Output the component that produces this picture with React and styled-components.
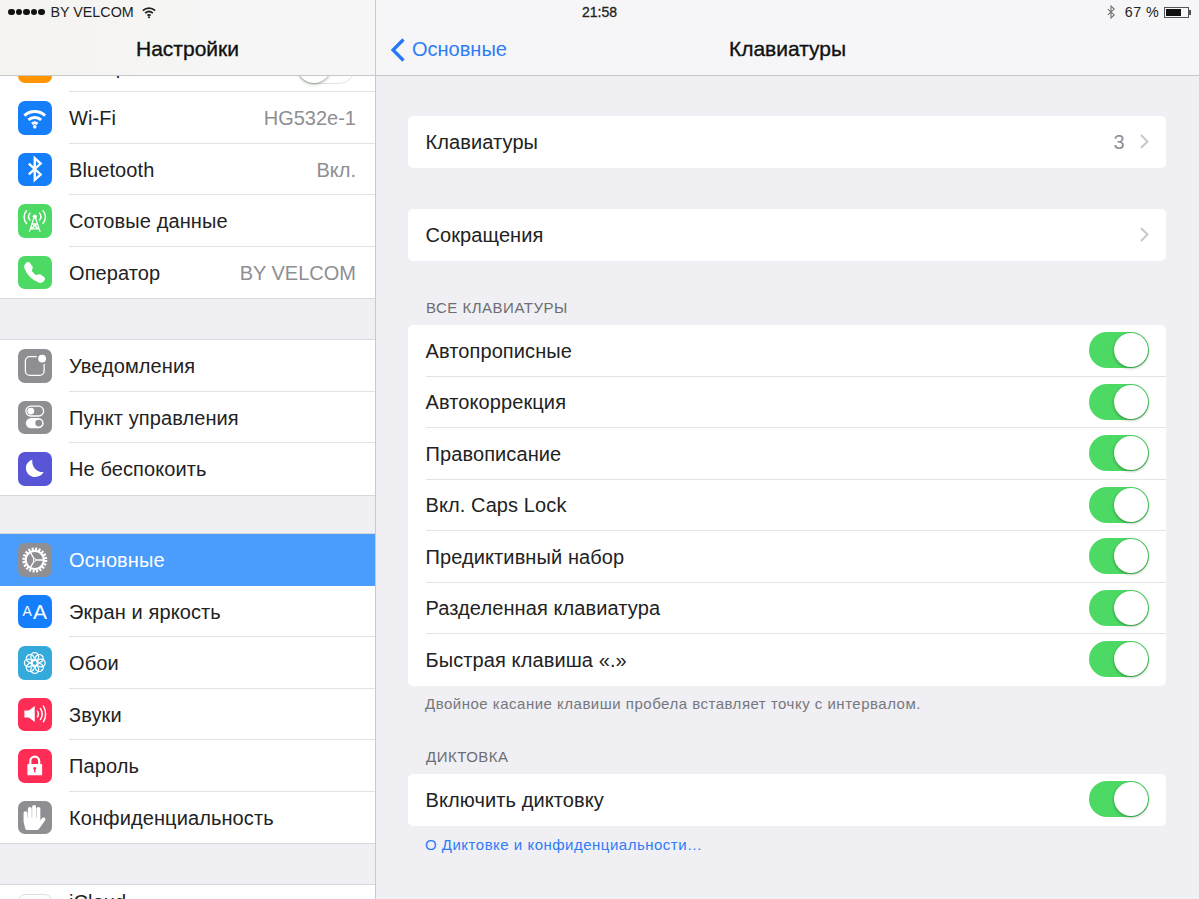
import React from 'react';
import styled, { createGlobalStyle } from 'styled-components';
import { BsTelephoneFill } from 'react-icons/bs';
import { FaHandPaper } from 'react-icons/fa';

const GlobalStyle = createGlobalStyle`
  html, body {
    margin: 0;
    padding: 0;
    background: #efeff4;
    font-family: "Liberation Sans", Arial, sans-serif;
    color: #222;
  }
  * {
    box-sizing: border-box;
  }
`;

const Page = styled.div`
  position: relative;
  width: 1199px;
  height: 899px;
  overflow: hidden;
  display: flex;
  background: #efeff4;
`;

const StatusBar = styled.div`
  position: absolute;
  top: 0;
  left: 0;
  right: 0;
  height: 24px;
  padding: 0 8px;
  display: grid;
  grid-template-columns: 1fr auto 1fr;
  align-items: center;
  font-size: 14.3px;
  color: #222;
  z-index: 2;
`;

const StatusLeft = styled.div`
  display: flex;
  align-items: center;
  gap: 5px;
`;

const StatusRight = styled.div`
  display: flex;
  align-items: center;
  justify-content: flex-end;
`;

const Dots = styled.div`
  display: flex;
  gap: 1px;
  margin-right: 1px;
`;

const Dot = styled.span`
  width: 6.5px;
  height: 6.5px;
  border-radius: 50%;
  background: #111;
`;

const Clock = styled.div`
  font-size: 14px;
  -webkit-text-stroke: 0.3px #222;
`;

const BatteryText = styled.span`
  margin-left: 5px;
  letter-spacing: 0.4px;
`;

const Battery = styled.div`
  position: relative;
  width: 25px;
  height: 11px;
  margin: 0 2px 0 5px;
  border: 1px solid #555;
  padding: 1px;

  &::before {
    content: '';
    display: block;
    width: 15px;
    height: 100%;
    background: #111;
  }

  &::after {
    content: '';
    position: absolute;
    right: -3px;
    top: 2px;
    width: 2px;
    height: 5px;
    background: #555;
  }
`;

const Sidebar = styled.aside`
  width: 376px;
  flex: none;
  display: flex;
  flex-direction: column;
  border-right: 1px solid #c9c9cd;
  overflow: hidden;
`;

const NavBar = styled.header`
  position: relative;
  height: 76px;
  flex: none;
  padding-top: 24px;
  border-bottom: 1px solid #c8c8cc;
  background: ${(p) => (p.$warm ? 'linear-gradient(90deg, #f5f3ef, #f6f6f6 60%)' : '#f6f6f8')};
  display: grid;
  grid-template-columns: 1fr auto 1fr;
  align-items: center;
  z-index: 1;
`;

const NavTitle = styled.div`
  font-size: 21px;
  margin-bottom: 2px;
  -webkit-text-stroke: 0.35px #111;
  color: #111;
  grid-column: 2;
`;

const BackLink = styled.div`
  grid-column: 1;
  display: flex;
  align-items: center;
  gap: 6px;
  padding-left: 14px;
  color: #2f7cf6;
  font-size: 20px;
`;

const ScrollArea = styled.div`
  flex: 1;
  min-height: 0;
  overflow: hidden;
`;

const SideList = styled.div`
  margin-top: -35.5px;
`;

const SideGroup = styled.div`
  background: #fff;
  box-shadow: 0 1px #d9d9dd, 0 -1px ${(p) => (p.$first ? 'transparent' : '#d9d9dd')};
  margin-bottom: ${(p) => p.$gap}px;
`;

const SideRow = styled.div`
  position: relative;
  height: 51.5px;
  display: flex;
  align-items: center;
  padding: 0 19px 0 18px;
  font-size: 20px;
  background: ${(p) => (p.$active ? '#4a9cfd' : 'transparent')};
  color: ${(p) => (p.$active ? '#fff' : 'inherit')};

  & + &::before {
    content: '';
    position: absolute;
    top: -1px;
    left: 69px;
    right: 0;
    height: 1px;
    background: #e2e2e4;
  }
`;

const IconTile = styled.div`
  width: 33.5px;
  height: 33.5px;
  flex: none;
  border-radius: 7px;
  margin-right: 17.5px;
  background: ${(p) => p.$bg};
  border: ${(p) => (p.$bg === '#fff' ? '1px solid #ddd' : 'none')};
  color: #fff;
  display: flex;
  align-items: center;
  justify-content: center;
  font-size: 20px;
`;

const TileText = styled.span`
  font-size: ${(p) => p.$size}px;
  line-height: 1;
  margin-right: ${(p) => p.$gap || 0}px;
`;

const RowLabel = styled.div`
  flex: 1;
  padding: ${(p) => (p.$raised ? '0 0 16px' : '2px 0 0')};
  letter-spacing: 0.1px;
`;

const RowValue = styled.div`
  padding-top: 2px;
  color: #8e8e93;
`;

const Main = styled.main`
  flex: 1;
  min-width: 0;
  display: flex;
  flex-direction: column;
`;

const Content = styled.div`
  padding: 40px 33px 0 32px;
`;

const Card = styled.div`
  background: #fff;
  border-radius: 5px;
  margin-top: ${(p) => p.$gap || 0}px;
`;

const CardRow = styled.div`
  position: relative;
  height: 51.5px;
  display: flex;
  align-items: center;
  padding: 0 17.5px;
  font-size: 20px;

  & + &::before {
    content: '';
    position: absolute;
    top: -1px;
    left: 17.5px;
    right: 0;
    height: 1px;
    background: #e4e4e6;
  }
`;

const CardLabel = styled.div`
  flex: 1;
  padding-top: 1px;
  letter-spacing: 0.1px;
`;

const Count = styled.div`
  color: #8e8e93;
  padding-top: 1px;
  margin-right: 15px;
`;

const SectionLabel = styled.div`
  margin-top: ${(p) => p.$gap}px;
  height: 27px;
  padding: 1px 18px 0;
  line-height: 18px;
  font-size: 15px;
  letter-spacing: 0.5px;
  color: #6d6d72;
`;

const Note = styled.div`
  padding: ${(p) => (p.$link ? 10 : 9)}px 17px 0;
  line-height: 18px;
  font-size: 15px;
  letter-spacing: 0.5px;
  color: ${(p) => (p.$link ? '#2f7cf6' : '#77777c')};
`;

const Track = styled.div`
  position: relative;
  width: 60px;
  height: 36px;
  flex: none;
  margin-bottom: 1.5px;
  border-radius: 18px;
  background: ${(p) => (p.$on ? '#4cd964' : '#fff')};
  border: ${(p) => (p.$on ? 'none' : '1px solid #e2e2e4')};
`;

const Knob = styled.div`
  position: absolute;
  top: ${(p) => (p.$on ? 1 : 0)}px;
  ${(p) => (p.$on ? 'right: 1px' : 'left: 0')};
  width: 34px;
  height: 34px;
  border-radius: 50%;
  background: #fff;
  box-shadow: 0 1px 3px rgba(0, 40, 0, 0.45);
`;

const Toggle = ({ on }) => (
  <Track $on={on}>
    <Knob $on={on} />
  </Track>
);

const Chevron = () => (
  <svg width="9" height="15" viewBox="0 0 9 15">
    <path d="M1 1l6.5 6.5L1 14" fill="none" stroke="#c7c7cc" strokeWidth="2" />
  </svg>
);

const WifiGlyph = ({ size = 34, color = '#fff' }) => (
  <svg width={size} height={size} viewBox="0 0 34 34" fill="none" stroke={color} strokeWidth="3">
    <path d="M6.5 14.5c6-5.5 15-5.5 21 0" />
    <path d="M10.5 19c3.800-3.400 9.200-3.400 13 0" />
    <path d="M14.200 23c1.700-1.400 3.900-1.400 5.600 0" />
    <circle cx="17" cy="26" r="1.800" fill={color} stroke="none" />
  </svg>
);

const BluetoothGlyph = ({ size = 34, color = '#fff', width = 2.4 }) => (
  <svg width={size} height={size} viewBox="0 0 34 34" fill="none" stroke={color} strokeWidth={width}>
    <path d="M11 11.500l12 11-6 5.500V6l6 5.500-12 11" />
  </svg>
);

const Icons = {
  airplane: () => null,
  wifi: () => <WifiGlyph />,
  bluetooth: () => <BluetoothGlyph />,
  cellular: () => (
    <svg width="34" height="34" viewBox="0 0 34 34" fill="none" stroke="#fff" strokeWidth="1.300">
      <circle cx="17" cy="12.500" r="2.200" fill="#fff" stroke="none" />
      <path d="M16.500 13L11.500 28M17.500 13l5 15M14.500 20h5M13 25l6.500-5M21 25l-6.500-5M12.500 25h9" />
      <path d="M12.500 8.500c-2.200 2.400-2.200 5.600 0 8M21.500 8.500c2.200 2.400 2.200 5.600 0 8" strokeWidth="1.500" />
      <path d="M9 6c-3.800 4-3.800 10 0 14M25 6c3.800 4 3.800 10 0 14" strokeWidth="1.500" />
    </svg>
  ),
  phone: () => <BsTelephoneFill size={21} />,
  notifications: () => (
    <svg width="34" height="34" viewBox="0 0 34 34" fill="none">
      <rect x="7.500" y="7.500" width="19" height="19" rx="4.500" stroke="#fff" strokeWidth="1.300" />
      <circle cx="24.500" cy="9.500" r="5.800" fill="#8e8e93" />
      <circle cx="24.500" cy="9.500" r="4" fill="#fff" />
    </svg>
  ),
  control: () => (
    <svg width="34" height="34" viewBox="0 0 34 34" fill="none">
      <rect x="8" y="6" width="18" height="10" rx="5" stroke="#fff" strokeWidth="1.300" />
      <circle cx="13" cy="11" r="3.500" fill="#fff" />
      <rect x="8" y="18" width="18" height="10.500" rx="5.250" fill="#fff" />
      <circle cx="21" cy="23.200" r="3.500" fill="#8e8e93" />
    </svg>
  ),
  moon: () => (
    <svg width="34" height="34" viewBox="0 0 34 34">
      <path d="M14.500 7.500c-.8 6.800 4 12.800 11.500 12.600-1.800 3.300-5 5-8.500 5-5.400 0-9.500-4.200-9.500-9.200 0-3.800 2.600-7.200 6.500-8.400z" fill="#fff" />
    </svg>
  ),
  gear: () => (
    <svg width="34" height="34" viewBox="0 0 34 34" fill="none" stroke="#fff">
      <circle cx="17" cy="17" r="9.200" strokeWidth="2.200" />
      <circle cx="17" cy="17" r="11.200" strokeWidth="3" strokeDasharray="2.100 1.420" />
      <circle cx="17" cy="17" r="1.400" strokeWidth="1" />
      <path d="M18.400 17h7.800M16.300 15.800L12.400 9M16.300 18.200l-3.900 6.800" strokeWidth="1.300" />
    </svg>
  ),
  text: () => (
    <>
      <TileText $size={14} $gap={1}>A</TileText>
      <TileText $size={21}>A</TileText>
    </>
  ),
  flower: () => (
    <svg width="34" height="34" viewBox="0 0 34 34" fill="none" stroke="#fff" strokeWidth="1.300">
      <circle cx="17" cy="17" r="3.200" />
      {[0, 45, 90, 135, 180, 225, 270, 315].map((a) => (
        <circle key={a} cx="17" cy="10.500" r="4" transform={`rotate(${a} 17 17)`} />
      ))}
    </svg>
  ),
  sound: () => (
    <svg width="34" height="34" viewBox="0 0 34 34" fill="none" stroke="#fff" strokeWidth="1.500">
      <path d="M6.500 13.500h4.500l6-4.500v16l-6-4.500H6.500z" fill="#fff" stroke="none" />
      <path d="M19.500 13.500c1.500 2.200 1.500 4.800 0 7M22.500 11c2.500 3.600 2.500 8.400 0 12M25.500 8.500c3.400 5 3.400 12 0 17" />
    </svg>
  ),
  lock: () => (
    <svg width="34" height="34" viewBox="0 0 34 34">
      <path d="M12.500 16v-4a4.500 4.500 0 0 1 9 0v4" fill="none" stroke="#fff" strokeWidth="2.200" />
      <rect x="9.500" y="15" width="15" height="11.500" rx="1" fill="#fff" />
      <circle cx="17" cy="19.500" r="1.500" fill="#ff2d55" />
      <rect x="16.300" y="20" width="1.400" height="3.500" fill="#ff2d55" />
    </svg>
  ),
  hand: () => <FaHandPaper size={25} style={{ transform: 'scaleX(-1)' }} />,
  cloud: () => null,
};

const sideGroups = [
  {
    gap: 42,
    rows: [
      { icon: 'airplane', bg: '#ff9500', label: 'Авиарежим', toggle: true },
      { icon: 'wifi', bg: '#147efb', label: 'Wi-Fi', value: 'HG532e-1' },
      { icon: 'bluetooth', bg: '#147efb', label: 'Bluetooth', value: 'Вкл.' },
      { icon: 'cellular', bg: '#4cd964', label: 'Сотовые данные' },
      { icon: 'phone', bg: '#4cd964', label: 'Оператор', value: 'BY VELCOM' },
    ],
  },
  {
    gap: 39.5,
    rows: [
      { icon: 'notifications', bg: '#8e8e93', label: 'Уведомления' },
      { icon: 'control', bg: '#8e8e93', label: 'Пункт управления' },
      { icon: 'moon', bg: '#5856d6', label: 'Не беспокоить' },
    ],
  },
  {
    gap: 42,
    rows: [
      { icon: 'gear', bg: '#8e8e93', label: 'Основные', active: true },
      { icon: 'text', bg: '#147efb', label: 'Экран и яркость' },
      { icon: 'flower', bg: '#34aadc', label: 'Обои' },
      { icon: 'sound', bg: '#ff2d55', label: 'Звуки' },
      { icon: 'lock', bg: '#ff2d55', label: 'Пароль' },
      { icon: 'hand', bg: '#8e8e93', label: 'Конфиденциальность' },
    ],
  },
  { gap: 0, rows: [{ icon: 'cloud', bg: '#fff', label: 'iCloud', raised: true }] },
];

const keyboardToggles = [
  'Автопрописные',
  'Автокоррекция',
  'Правописание',
  'Вкл. Caps Lock',
  'Предиктивный набор',
  'Разделенная клавиатура',
  'Быстрая клавиша «.»',
];

const App = () => {
  return (
    <Page>
      <GlobalStyle />
      <StatusBar>
        <StatusLeft>
          <Dots>
            {[0, 1, 2, 3, 4].map((i) => (
              <Dot key={i} />
            ))}
          </Dots>
          BY VELCOM
          <WifiGlyph size={20} color="#222" />
        </StatusLeft>
        <Clock>21:58</Clock>
        <StatusRight>
          <BluetoothGlyph size={18} color="#777" width={2.2} />
          <BatteryText>67 %</BatteryText>
          <Battery />
        </StatusRight>
      </StatusBar>

      <Sidebar>
        <NavBar $warm>
          <NavTitle>Настройки</NavTitle>
        </NavBar>
        <ScrollArea>
          <SideList>
            {sideGroups.map((group, i) => (
              <SideGroup key={i} $first={i === 0} $gap={group.gap}>
                {group.rows.map((row) => {
                  const Icon = Icons[row.icon];
                  return (
                    <SideRow key={row.label} $active={row.active}>
                      <IconTile $bg={row.bg}>
                        <Icon />
                      </IconTile>
                      <RowLabel $raised={row.raised}>{row.label}</RowLabel>
                      {row.value && <RowValue>{row.value}</RowValue>}
                      {row.toggle && <Toggle />}
                    </SideRow>
                  );
                })}
              </SideGroup>
            ))}
          </SideList>
        </ScrollArea>
      </Sidebar>

      <Main>
        <NavBar>
          <BackLink>
            <svg width="16" height="24" viewBox="0 0 16 24">
              <path d="M13.500 1.500L3 12l10.500 10.500" fill="none" stroke="#2478f5" strokeWidth="3.200" />
            </svg>
            Основные
          </BackLink>
          <NavTitle>Клавиатуры</NavTitle>
        </NavBar>
        <Content>
          <Card>
            <CardRow>
              <CardLabel>Клавиатуры</CardLabel>
              <Count>3</Count>
              <Chevron />
            </CardRow>
          </Card>
          <Card $gap={41.5}>
            <CardRow>
              <CardLabel>Сокращения</CardLabel>
              <Chevron />
            </CardRow>
          </Card>
          <SectionLabel $gap={37.5}>ВСЕ КЛАВИАТУРЫ</SectionLabel>
          <Card>
            {keyboardToggles.map((label) => (
              <CardRow key={label}>
                <CardLabel>{label}</CardLabel>
                <Toggle on />
              </CardRow>
            ))}
          </Card>
          <Note>Двойное касание клавиши пробела вставляет точку с интервалом.</Note>
          <SectionLabel $gap={34.5}>ДИКТОВКА</SectionLabel>
          <Card>
            <CardRow>
              <CardLabel>Включить диктовку</CardLabel>
              <Toggle on />
            </CardRow>
          </Card>
          <Note $link>О Диктовке и конфиденциальности…</Note>
        </Content>
      </Main>
    </Page>
  );
};

export default App;
